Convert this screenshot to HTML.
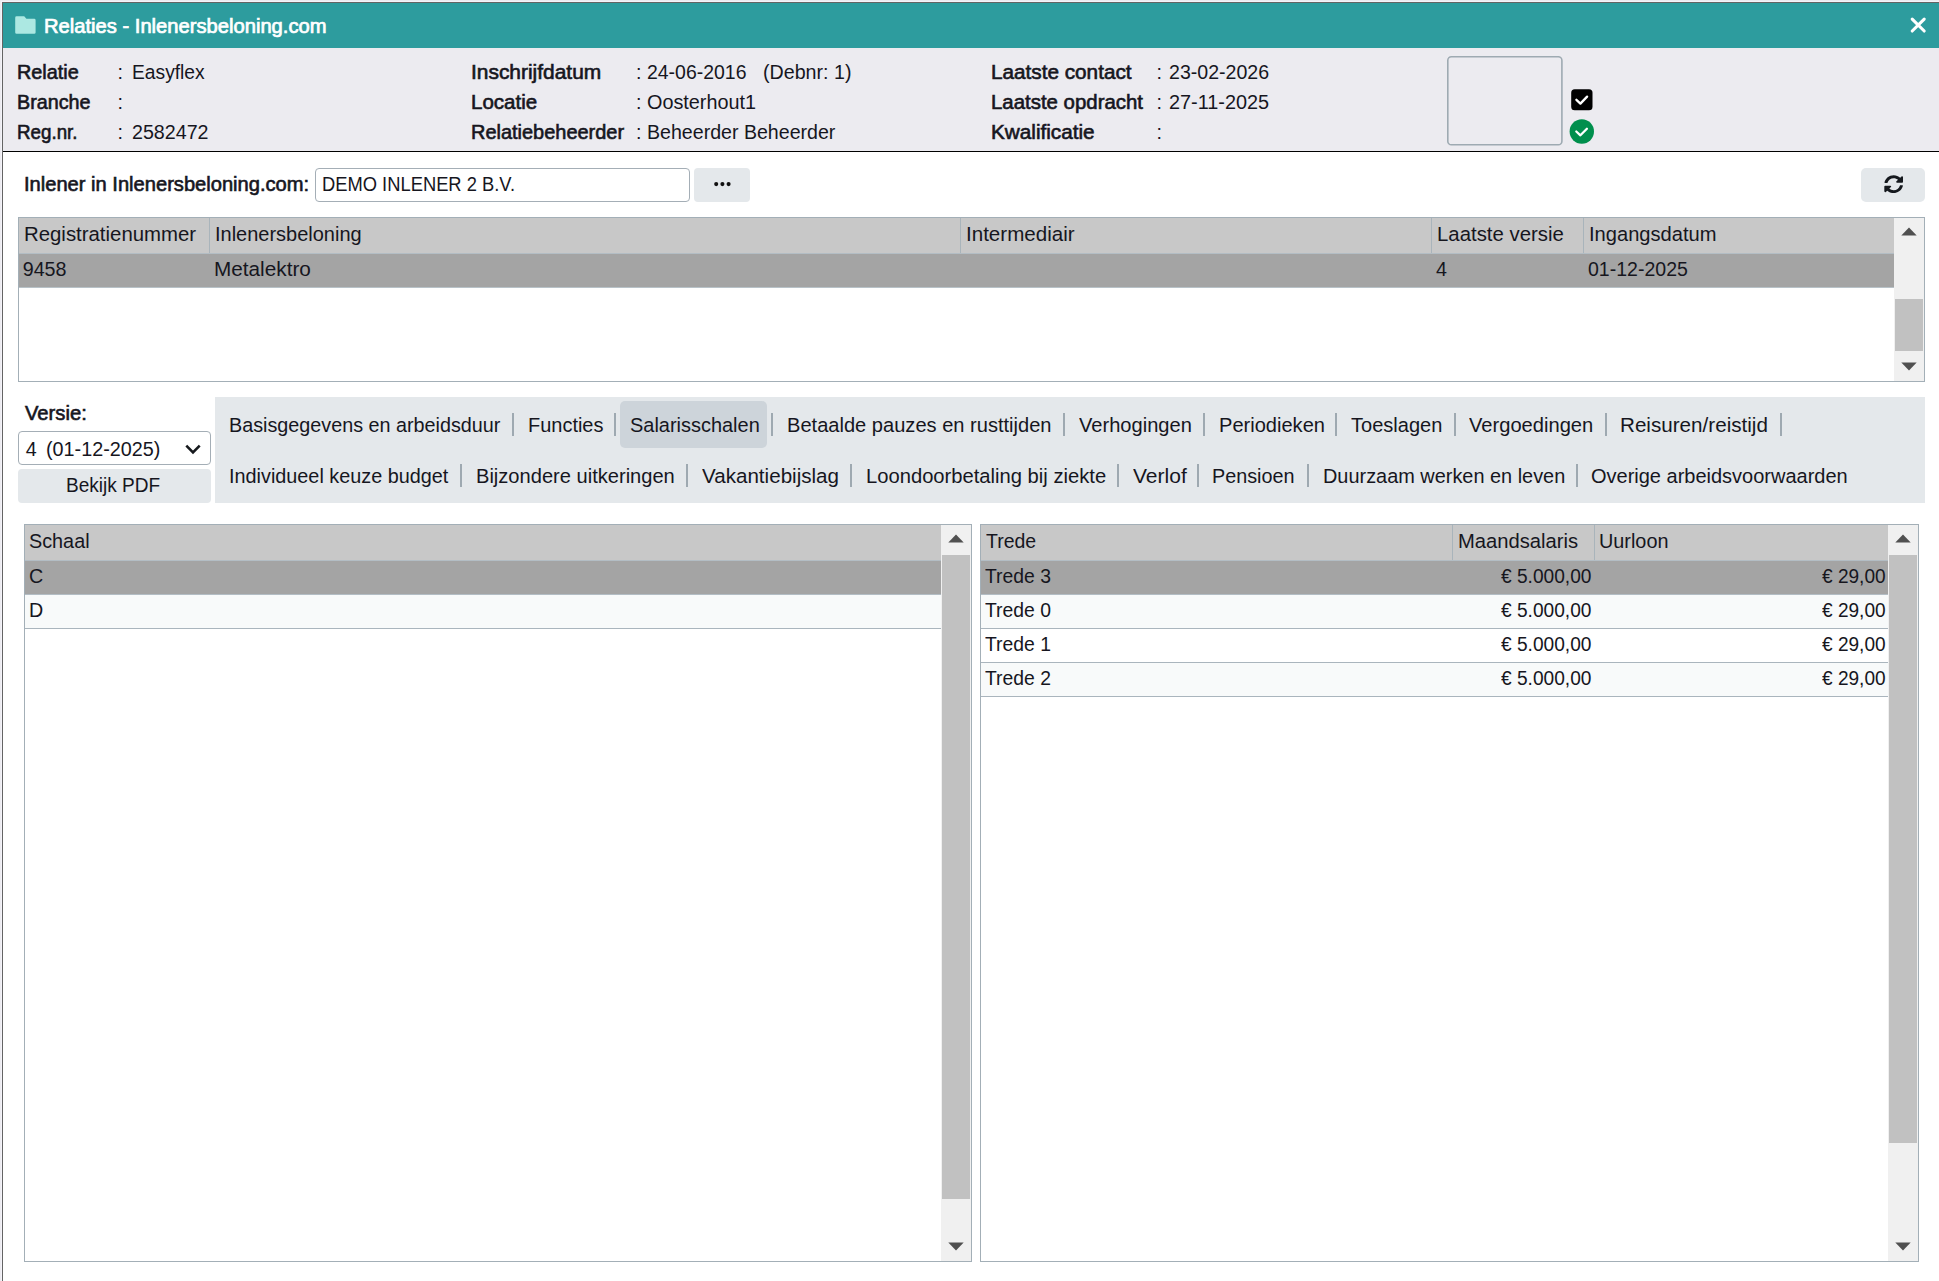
<!DOCTYPE html>
<html><head><meta charset="utf-8"><style>
html,body{margin:0;padding:0;width:1939px;height:1281px;overflow:hidden;background:#fff}
body{position:relative;font-family:"Liberation Sans",sans-serif}
.r{position:absolute;box-sizing:content-box}
.t{position:absolute;white-space:nowrap;line-height:30px}
</style></head><body>
<div class="r" style="left:0px;top:0px;width:1939px;height:1281px;background:#ecebf0;"></div>
<div class="r" style="left:1px;top:1px;width:1938px;height:1280px;background:#f4f3f9;"></div>
<div class="r" style="left:2px;top:2px;width:1937px;height:1279px;background:#646464;"></div>
<div class="r" style="left:3px;top:3px;width:1936px;height:1278px;background:#ffffff;"></div>
<div class="r" style="left:3px;top:3px;width:1936px;height:45px;background:#2d9c9e;"></div>
<svg class="r" style="left:15px;top:16px" width="22" height="19" viewBox="0 0 22 19"><path transform="translate(0.2,0.25)" d="M1.4 0 h7.6 l2.2 2.5 h7.8 a1.4 1.4 0 0 1 1.4 1.4 v12.3 a1.4 1.4 0 0 1 -1.4 1.4 h-17.6 a1.4 1.4 0 0 1 -1.4 -1.4 v-14.8 a1.4 1.4 0 0 1 1.4 -1.4z" fill="#ace8e2"/></svg>
<div class="t" style="left:43.90px;top:11.00px;font-size:19.7px;color:#ffffff;-webkit-text-stroke:0.7px #ffffff;transform:scaleX(1.0245);transform-origin:0 0;">Relaties - Inlenersbeloning.com</div>
<svg class="r" style="left:1905px;top:12px" width="26" height="26" viewBox="0 0 26 26"><path d="M7.2 7.2 L19.2 19.0 M19.2 7.2 L7.2 19.0" stroke="#fff" stroke-width="3.1" stroke-linecap="round"/></svg>
<div class="r" style="left:3px;top:48px;width:1936px;height:103px;background:#ecebf0;"></div>
<div class="r" style="left:3px;top:151px;width:1936px;height:1px;background:#000000;"></div>
<div class="t" style="left:16.80px;top:57.00px;font-size:19.7px;color:#16161e;-webkit-text-stroke:0.6px #16161e;transform:scaleX(1.0077);transform-origin:0 0;">Relatie</div>
<div class="t" style="left:117.50px;top:57.00px;font-size:19.7px;color:#16161e;">:</div>
<div class="t" style="left:131.80px;top:57.00px;font-size:19.7px;color:#16161e;transform:scaleX(0.9765);transform-origin:0 0;">Easyflex</div>
<div class="t" style="left:16.80px;top:87.00px;font-size:19.7px;color:#16161e;-webkit-text-stroke:0.6px #16161e;transform:scaleX(1.0016);transform-origin:0 0;">Branche</div>
<div class="t" style="left:117.50px;top:87.00px;font-size:19.7px;color:#16161e;">:</div>
<div class="t" style="left:16.80px;top:117.00px;font-size:19.7px;color:#16161e;-webkit-text-stroke:0.6px #16161e;transform:scaleX(0.9541);transform-origin:0 0;">Reg.nr.</div>
<div class="t" style="left:117.50px;top:117.00px;font-size:19.7px;color:#16161e;">:</div>
<div class="t" style="left:131.80px;top:117.00px;font-size:19.7px;color:#16161e;transform:scaleX(0.9988);transform-origin:0 0;">2582472</div>
<div class="t" style="left:471.30px;top:57.00px;font-size:19.7px;color:#16161e;-webkit-text-stroke:0.6px #16161e;transform:scaleX(1.0625);transform-origin:0 0;">Inschrijfdatum</div>
<div class="t" style="left:636.00px;top:57.00px;font-size:19.7px;color:#16161e;">:</div>
<div class="t" style="left:646.80px;top:57.00px;font-size:19.7px;color:#16161e;transform:scaleX(0.9874);transform-origin:0 0;">24-06-2016</div>
<div class="t" style="left:471.30px;top:87.00px;font-size:19.7px;color:#16161e;-webkit-text-stroke:0.6px #16161e;transform:scaleX(1.0420);transform-origin:0 0;">Locatie</div>
<div class="t" style="left:636.00px;top:87.00px;font-size:19.7px;color:#16161e;">:</div>
<div class="t" style="left:646.80px;top:87.00px;font-size:19.7px;color:#16161e;transform:scaleX(1.0064);transform-origin:0 0;">Oosterhout1</div>
<div class="t" style="left:471.30px;top:117.00px;font-size:19.7px;color:#16161e;-webkit-text-stroke:0.6px #16161e;transform:scaleX(1.0136);transform-origin:0 0;">Relatiebeheerder</div>
<div class="t" style="left:636.00px;top:117.00px;font-size:19.7px;color:#16161e;">:</div>
<div class="t" style="left:646.80px;top:117.00px;font-size:19.7px;color:#16161e;transform:scaleX(0.9949);transform-origin:0 0;">Beheerder Beheerder</div>
<div class="t" style="left:762.80px;top:57.00px;font-size:19.7px;color:#16161e;transform:scaleX(0.9979);transform-origin:0 0;">(Debnr: 1)</div>
<div class="t" style="left:991.30px;top:57.00px;font-size:19.7px;color:#16161e;-webkit-text-stroke:0.6px #16161e;transform:scaleX(1.0524);transform-origin:0 0;">Laatste contact</div>
<div class="t" style="left:1156.50px;top:57.00px;font-size:19.7px;color:#16161e;">:</div>
<div class="t" style="left:1168.50px;top:57.00px;font-size:19.7px;color:#16161e;transform:scaleX(0.9944);transform-origin:0 0;">23-02-2026</div>
<div class="t" style="left:991.30px;top:87.00px;font-size:19.7px;color:#16161e;-webkit-text-stroke:0.6px #16161e;transform:scaleX(1.0364);transform-origin:0 0;">Laatste opdracht</div>
<div class="t" style="left:1156.50px;top:87.00px;font-size:19.7px;color:#16161e;">:</div>
<div class="t" style="left:1168.50px;top:87.00px;font-size:19.7px;color:#16161e;transform:scaleX(1.0090);transform-origin:0 0;">27-11-2025</div>
<div class="t" style="left:991.30px;top:117.00px;font-size:19.7px;color:#16161e;-webkit-text-stroke:0.6px #16161e;transform:scaleX(1.0524);transform-origin:0 0;">Kwalificatie</div>
<div class="t" style="left:1156.50px;top:117.00px;font-size:19.7px;color:#16161e;">:</div>
<svg class="r" style="left:1440px;top:50px" width="130" height="100"><rect x="7.8" y="6.8" width="114.1" height="88" rx="3.6" fill="none" stroke="#9eaab2" stroke-width="1.6"/></svg>
<svg class="r" style="left:1571px;top:89px" width="22" height="22" viewBox="0 0 22 22"><rect x="0.2" y="0.2" width="21.3" height="21" rx="3.5" fill="#000"/><path d="M5.4 10.8 L9.4 14.6 L16.1 7.6" stroke="#fff" stroke-width="2.3" fill="none" stroke-linecap="round" stroke-linejoin="round"/></svg>
<svg class="r" style="left:1569px;top:119px" width="26" height="26" viewBox="0 0 26 26"><circle cx="12.8" cy="12.5" r="12.2" fill="#008f4d"/><path d="M7.3 12.5 L11.4 16.3 L17.9 9.7" stroke="#fff" stroke-width="2.3" fill="none" stroke-linecap="round" stroke-linejoin="round"/></svg>
<div class="t" style="left:24.20px;top:169.00px;font-size:19.7px;color:#16161e;-webkit-text-stroke:0.6px #16161e;transform:scaleX(1.0217);transform-origin:0 0;">Inlener in Inlenersbeloning.com:</div>
<div class="r" style="left:315px;top:168px;width:373px;height:32px;border:1px solid #a4aeb6;border-radius:4px;background:#fff"></div>
<div class="t" style="left:322.20px;top:169.00px;font-size:19.7px;color:#16161e;transform:scaleX(0.9316);transform-origin:0 0;">DEMO INLENER 2 B.V.</div>
<div class="r" style="left:694px;top:168px;width:56px;height:34px;border-radius:4px;background:#e4e8eb"></div>
<svg class="r" style="left:700px;top:170px" width="40" height="30" viewBox="0 0 40 30"><circle cx="16.2" cy="14.1" r="2.05" fill="#111"/><circle cx="22.4" cy="14.1" r="2.05" fill="#111"/><circle cx="28.6" cy="14.1" r="2.05" fill="#111"/></svg>
<div class="r" style="left:1861px;top:168px;width:64px;height:34px;border-radius:5px;background:#e4e8eb"></div>
<svg class="r" style="left:1883.7px;top:174.7px" width="19.4" height="18.4" viewBox="0 0 512 512" preserveAspectRatio="none"><path fill="#15191e" d="M370.72 133.28C339.458 104.008 298.888 87.962 255.848 88c-77.458.068-144.328 53.178-162.791 126.85-1.344 5.363-6.122 9.15-11.651 9.15H24.103c-7.498 0-13.194-6.807-11.807-14.176C33.933 94.924 134.813 8 256 8c66.448 0 126.791 26.136 171.315 68.685L463.03 40.97C478.149 25.851 504 36.559 504 57.941V192c0 13.255-10.745 24-24 24H345.941c-21.382 0-32.09-25.851-16.971-40.971l41.75-41.749zM32 296h134.059c21.382 0 32.09 25.851 16.971 40.971l-41.75 41.75c31.262 29.273 71.835 45.319 114.876 45.28 77.418-.07 144.315-53.144 162.787-126.849 1.344-5.363 6.122-9.15 11.651-9.15h57.304c7.498 0 13.194 6.807 11.807 14.176C478.067 417.076 377.187 504 256 504c-66.448 0-126.791-26.136-171.315-68.685L48.97 471.03C33.851 486.149 8 475.441 8 454.059V320c0-13.255 10.745-24 24-24z"/></svg>
<div class="r" style="left:18px;top:217px;width:1907px;height:165px;background:#a3afb7;"></div>
<div class="r" style="left:19px;top:218px;width:1905px;height:163px;background:#ffffff;"></div>
<div class="r" style="left:19px;top:218px;width:1875px;height:35px;background:#c8c8c8;"></div>
<div class="r" style="left:19px;top:253px;width:1875px;height:1px;background:#b3bdc4;"></div>
<div class="r" style="left:19px;top:254px;width:1875px;height:33px;background:#a4a4a4;"></div>
<div class="r" style="left:19px;top:287px;width:1875px;height:1px;background:#b8c2c8;"></div>
<div class="r" style="left:209px;top:218px;width:1px;height:35px;background:#a9b4bb;"></div>
<div class="r" style="left:960px;top:218px;width:1px;height:35px;background:#a9b4bb;"></div>
<div class="r" style="left:1431px;top:218px;width:1px;height:35px;background:#a9b4bb;"></div>
<div class="r" style="left:1583px;top:218px;width:1px;height:35px;background:#a9b4bb;"></div>
<div class="r" style="left:1894px;top:218px;width:30px;height:163px;background:#f0f0f0;"></div>
<div class="r" style="left:1895px;top:299px;width:28px;height:52px;background:#c1c1c1;"></div>
<svg class="r" style="left:1900.5px;top:227px" width="16" height="9" viewBox="0 0 16 9"><path d="M0.3 8.6 L8 0.6 L15.7 8.6Z" fill="#505050"/></svg>
<svg class="r" style="left:1900.5px;top:362px" width="16" height="9" viewBox="0 0 16 9"><path d="M0.3 0.4 L8 8.4 L15.7 0.4Z" fill="#505050"/></svg>
<div class="t" style="left:24.10px;top:219.00px;font-size:19.7px;color:#16161e;transform:scaleX(1.0348);transform-origin:0 0;">Registratienummer</div>
<div class="t" style="left:214.50px;top:219.00px;font-size:19.7px;color:#16161e;transform:scaleX(1.0147);transform-origin:0 0;">Inlenersbeloning</div>
<div class="t" style="left:966.00px;top:219.00px;font-size:19.7px;color:#16161e;transform:scaleX(1.0450);transform-origin:0 0;">Intermediair</div>
<div class="t" style="left:1436.50px;top:219.00px;font-size:19.7px;color:#16161e;transform:scaleX(1.0346);transform-origin:0 0;">Laatste versie</div>
<div class="t" style="left:1588.70px;top:219.00px;font-size:19.7px;color:#16161e;transform:scaleX(1.0212);transform-origin:0 0;">Ingangsdatum</div>
<div class="t" style="left:22.70px;top:254.00px;font-size:19.7px;color:#16161e;">9458</div>
<div class="t" style="left:213.60px;top:254.00px;font-size:19.7px;color:#16161e;transform:scaleX(1.0537);transform-origin:0 0;">Metalektro</div>
<div class="t" style="left:1436.00px;top:254.00px;font-size:19.7px;color:#16161e;">4</div>
<div class="t" style="left:1587.80px;top:254.00px;font-size:19.7px;color:#16161e;transform:scaleX(0.9924);transform-origin:0 0;">01-12-2025</div>
<div class="t" style="left:25.40px;top:398.00px;font-size:19.7px;color:#16161e;-webkit-text-stroke:0.6px #16161e;transform:scaleX(1.0262);transform-origin:0 0;">Versie:</div>
<div class="r" style="left:18px;top:431px;width:191px;height:32px;border:1px solid #a4aeb6;border-radius:4px;background:#fff"></div>
<div class="t" style="left:25.80px;top:434.00px;font-size:19.7px;color:#16161e;">4</div>
<div class="t" style="left:45.60px;top:434.00px;font-size:19.7px;color:#16161e;transform:scaleX(1.0045);transform-origin:0 0;">(01-12-2025)</div>
<svg class="r" style="left:184px;top:441px" width="18" height="14" viewBox="0 0 18 14"><path d="M2.3 4.6 L9 11.3 L15.7 4.6" stroke="#16191d" stroke-width="2.6" fill="none" stroke-linecap="butt" stroke-linejoin="miter"/></svg>
<div class="r" style="left:18px;top:469px;width:193px;height:34px;border-radius:4px;background:#e4e8eb"></div>
<div class="t" style="left:65.80px;top:470.00px;font-size:19.7px;color:#16161e;transform:scaleX(0.9670);transform-origin:0 0;">Bekijk PDF</div>
<div class="r" style="left:215px;top:397px;width:1710px;height:106px;background:#e4e8eb;"></div>
<div class="r" style="left:620px;top:401px;width:147px;height:47px;border-radius:5px;background:#cdd4da"></div>
<div class="t" style="left:228.80px;top:410.00px;font-size:19.7px;color:#16161e;transform:scaleX(1.0040);transform-origin:0 0;">Basisgegevens en arbeidsduur</div>
<div class="t" style="left:527.50px;top:410.00px;font-size:19.7px;color:#16161e;transform:scaleX(1.0142);transform-origin:0 0;">Functies</div>
<div class="t" style="left:629.60px;top:410.00px;font-size:19.7px;color:#16161e;transform:scaleX(1.0132);transform-origin:0 0;">Salarisschalen</div>
<div class="t" style="left:786.70px;top:410.00px;font-size:19.7px;color:#16161e;transform:scaleX(1.0198);transform-origin:0 0;">Betaalde pauzes en rusttijden</div>
<div class="t" style="left:1078.80px;top:410.00px;font-size:19.7px;color:#16161e;transform:scaleX(1.0205);transform-origin:0 0;">Verhogingen</div>
<div class="t" style="left:1218.50px;top:410.00px;font-size:19.7px;color:#16161e;transform:scaleX(1.0189);transform-origin:0 0;">Periodieken</div>
<div class="t" style="left:1351.00px;top:410.00px;font-size:19.7px;color:#16161e;transform:scaleX(1.0177);transform-origin:0 0;">Toeslagen</div>
<div class="t" style="left:1469.30px;top:410.00px;font-size:19.7px;color:#16161e;transform:scaleX(1.0223);transform-origin:0 0;">Vergoedingen</div>
<div class="t" style="left:1620.00px;top:410.00px;font-size:19.7px;color:#16161e;transform:scaleX(1.0479);transform-origin:0 0;">Reisuren/reistijd</div>
<div class="t" style="left:228.50px;top:461.00px;font-size:19.7px;color:#16161e;transform:scaleX(1.0071);transform-origin:0 0;">Individueel keuze budget</div>
<div class="t" style="left:475.80px;top:461.00px;font-size:19.7px;color:#16161e;transform:scaleX(1.0204);transform-origin:0 0;">Bijzondere uitkeringen</div>
<div class="t" style="left:701.80px;top:461.00px;font-size:19.7px;color:#16161e;transform:scaleX(1.0462);transform-origin:0 0;">Vakantiebijslag</div>
<div class="t" style="left:865.70px;top:461.00px;font-size:19.7px;color:#16161e;transform:scaleX(1.0252);transform-origin:0 0;">Loondoorbetaling bij ziekte</div>
<div class="t" style="left:1132.80px;top:461.00px;font-size:19.7px;color:#16161e;transform:scaleX(1.0672);transform-origin:0 0;">Verlof</div>
<div class="t" style="left:1212.40px;top:461.00px;font-size:19.7px;color:#16161e;transform:scaleX(1.0055);transform-origin:0 0;">Pensioen</div>
<div class="t" style="left:1322.60px;top:461.00px;font-size:19.7px;color:#16161e;transform:scaleX(1.0108);transform-origin:0 0;">Duurzaam werken en leven</div>
<div class="t" style="left:1590.70px;top:461.00px;font-size:19.7px;color:#16161e;transform:scaleX(1.0152);transform-origin:0 0;">Overige arbeidsvoorwaarden</div>
<div class="r" style="left:512px;top:413px;width:2px;height:23px;background:#9ea9b1;"></div>
<div class="r" style="left:614px;top:413px;width:2px;height:23px;background:#9ea9b1;"></div>
<div class="r" style="left:771px;top:413px;width:2px;height:23px;background:#9ea9b1;"></div>
<div class="r" style="left:1063px;top:413px;width:2px;height:23px;background:#9ea9b1;"></div>
<div class="r" style="left:1203px;top:413px;width:2px;height:23px;background:#9ea9b1;"></div>
<div class="r" style="left:1335px;top:413px;width:2px;height:23px;background:#9ea9b1;"></div>
<div class="r" style="left:1454px;top:413px;width:2px;height:23px;background:#9ea9b1;"></div>
<div class="r" style="left:1605px;top:413px;width:2px;height:23px;background:#9ea9b1;"></div>
<div class="r" style="left:1780px;top:413px;width:2px;height:23px;background:#9ea9b1;"></div>
<div class="r" style="left:460px;top:464px;width:2px;height:23px;background:#9ea9b1;"></div>
<div class="r" style="left:686px;top:464px;width:2px;height:23px;background:#9ea9b1;"></div>
<div class="r" style="left:850px;top:464px;width:2px;height:23px;background:#9ea9b1;"></div>
<div class="r" style="left:1117px;top:464px;width:2px;height:23px;background:#9ea9b1;"></div>
<div class="r" style="left:1197px;top:464px;width:2px;height:23px;background:#9ea9b1;"></div>
<div class="r" style="left:1307px;top:464px;width:2px;height:23px;background:#9ea9b1;"></div>
<div class="r" style="left:1576px;top:464px;width:2px;height:23px;background:#9ea9b1;"></div>
<div class="r" style="left:24px;top:524px;width:948px;height:738px;background:#a3afb7;"></div>
<div class="r" style="left:25px;top:525px;width:946px;height:736px;background:#ffffff;"></div>
<div class="r" style="left:25px;top:525px;width:916px;height:35px;background:#c8c8c8;"></div>
<div class="r" style="left:25px;top:560px;width:916px;height:1px;background:#b3bdc4;"></div>
<div class="r" style="left:25px;top:561px;width:916px;height:33px;background:#a4a4a4;"></div>
<div class="r" style="left:25px;top:594px;width:916px;height:1px;background:#b3bdc4;"></div>
<div class="r" style="left:25px;top:595px;width:916px;height:33px;background:#f8fafa;"></div>
<div class="r" style="left:25px;top:628px;width:916px;height:1px;background:#aab5bd;"></div>
<div class="r" style="left:941px;top:525px;width:30px;height:736px;background:#f0f0f0;"></div>
<div class="r" style="left:942px;top:555px;width:28px;height:644px;background:#c1c1c1;"></div>
<svg class="r" style="left:947.5px;top:534px" width="16" height="9" viewBox="0 0 16 9"><path d="M0.3 8.6 L8 0.6 L15.7 8.6Z" fill="#505050"/></svg>
<svg class="r" style="left:947.5px;top:1242px" width="16" height="9" viewBox="0 0 16 9"><path d="M0.3 0.4 L8 8.4 L15.7 0.4Z" fill="#505050"/></svg>
<div class="t" style="left:29.40px;top:526.00px;font-size:19.7px;color:#16161e;transform:scaleX(1.0059);transform-origin:0 0;">Schaal</div>
<div class="t" style="left:29.00px;top:561.00px;font-size:19.7px;color:#16161e;">C</div>
<div class="t" style="left:29.00px;top:595.00px;font-size:19.7px;color:#16161e;">D</div>
<div class="r" style="left:980px;top:524px;width:939px;height:738px;background:#a3afb7;"></div>
<div class="r" style="left:981px;top:525px;width:937px;height:736px;background:#ffffff;"></div>
<div class="r" style="left:981px;top:525px;width:907px;height:35px;background:#c8c8c8;"></div>
<div class="r" style="left:981px;top:560px;width:907px;height:1px;background:#b3bdc4;"></div>
<div class="r" style="left:981px;top:561px;width:907px;height:33px;background:#a4a4a4;"></div>
<div class="r" style="left:981px;top:594px;width:907px;height:1px;background:#b3bdc4;"></div>
<div class="r" style="left:981px;top:595px;width:907px;height:33px;background:#f8fafa;"></div>
<div class="r" style="left:981px;top:628px;width:907px;height:1px;background:#aab5bd;"></div>
<div class="r" style="left:981px;top:629px;width:907px;height:33px;background:#ffffff;"></div>
<div class="r" style="left:981px;top:662px;width:907px;height:1px;background:#aab5bd;"></div>
<div class="r" style="left:981px;top:663px;width:907px;height:33px;background:#f8fafa;"></div>
<div class="r" style="left:981px;top:696px;width:907px;height:1px;background:#aab5bd;"></div>
<div class="r" style="left:1452px;top:525px;width:1px;height:35px;background:#a9b4bb;"></div>
<div class="r" style="left:1594px;top:525px;width:1px;height:35px;background:#a9b4bb;"></div>
<div class="r" style="left:1888px;top:525px;width:30px;height:736px;background:#f0f0f0;"></div>
<div class="r" style="left:1889px;top:555px;width:28px;height:588px;background:#c1c1c1;"></div>
<svg class="r" style="left:1894.5px;top:534px" width="16" height="9" viewBox="0 0 16 9"><path d="M0.3 8.6 L8 0.6 L15.7 8.6Z" fill="#505050"/></svg>
<svg class="r" style="left:1894.5px;top:1242px" width="16" height="9" viewBox="0 0 16 9"><path d="M0.3 0.4 L8 8.4 L15.7 0.4Z" fill="#505050"/></svg>
<div class="t" style="left:986.40px;top:526.00px;font-size:19.7px;color:#16161e;transform:scaleX(0.9896);transform-origin:0 0;">Trede</div>
<div class="t" style="left:1457.50px;top:526.00px;font-size:19.7px;color:#16161e;transform:scaleX(1.0260);transform-origin:0 0;">Maandsalaris</div>
<div class="t" style="left:1599.00px;top:526.00px;font-size:19.7px;color:#16161e;transform:scaleX(1.0074);transform-origin:0 0;">Uurloon</div>
<div class="t" style="left:985.30px;top:561.00px;font-size:19.7px;color:#16161e;transform:scaleX(0.9828);transform-origin:0 0;">Trede 3</div>
<div class="t" style="left:1500.80px;top:561.00px;font-size:19.7px;color:#16161e;transform:scaleX(0.9718);transform-origin:0 0;">€ 5.000,00</div>
<div class="t" style="left:1821.60px;top:561.00px;font-size:19.7px;color:#16161e;transform:scaleX(0.9678);transform-origin:0 0;">€ 29,00</div>
<div class="t" style="left:985.30px;top:595.00px;font-size:19.7px;color:#16161e;transform:scaleX(0.9828);transform-origin:0 0;">Trede 0</div>
<div class="t" style="left:1500.80px;top:595.00px;font-size:19.7px;color:#16161e;transform:scaleX(0.9718);transform-origin:0 0;">€ 5.000,00</div>
<div class="t" style="left:1821.60px;top:595.00px;font-size:19.7px;color:#16161e;transform:scaleX(0.9678);transform-origin:0 0;">€ 29,00</div>
<div class="t" style="left:985.30px;top:629.00px;font-size:19.7px;color:#16161e;transform:scaleX(0.9828);transform-origin:0 0;">Trede 1</div>
<div class="t" style="left:1500.80px;top:629.00px;font-size:19.7px;color:#16161e;transform:scaleX(0.9718);transform-origin:0 0;">€ 5.000,00</div>
<div class="t" style="left:1821.60px;top:629.00px;font-size:19.7px;color:#16161e;transform:scaleX(0.9678);transform-origin:0 0;">€ 29,00</div>
<div class="t" style="left:985.30px;top:663.00px;font-size:19.7px;color:#16161e;transform:scaleX(0.9828);transform-origin:0 0;">Trede 2</div>
<div class="t" style="left:1500.80px;top:663.00px;font-size:19.7px;color:#16161e;transform:scaleX(0.9718);transform-origin:0 0;">€ 5.000,00</div>
<div class="t" style="left:1821.60px;top:663.00px;font-size:19.7px;color:#16161e;transform:scaleX(0.9678);transform-origin:0 0;">€ 29,00</div>
</body></html>
